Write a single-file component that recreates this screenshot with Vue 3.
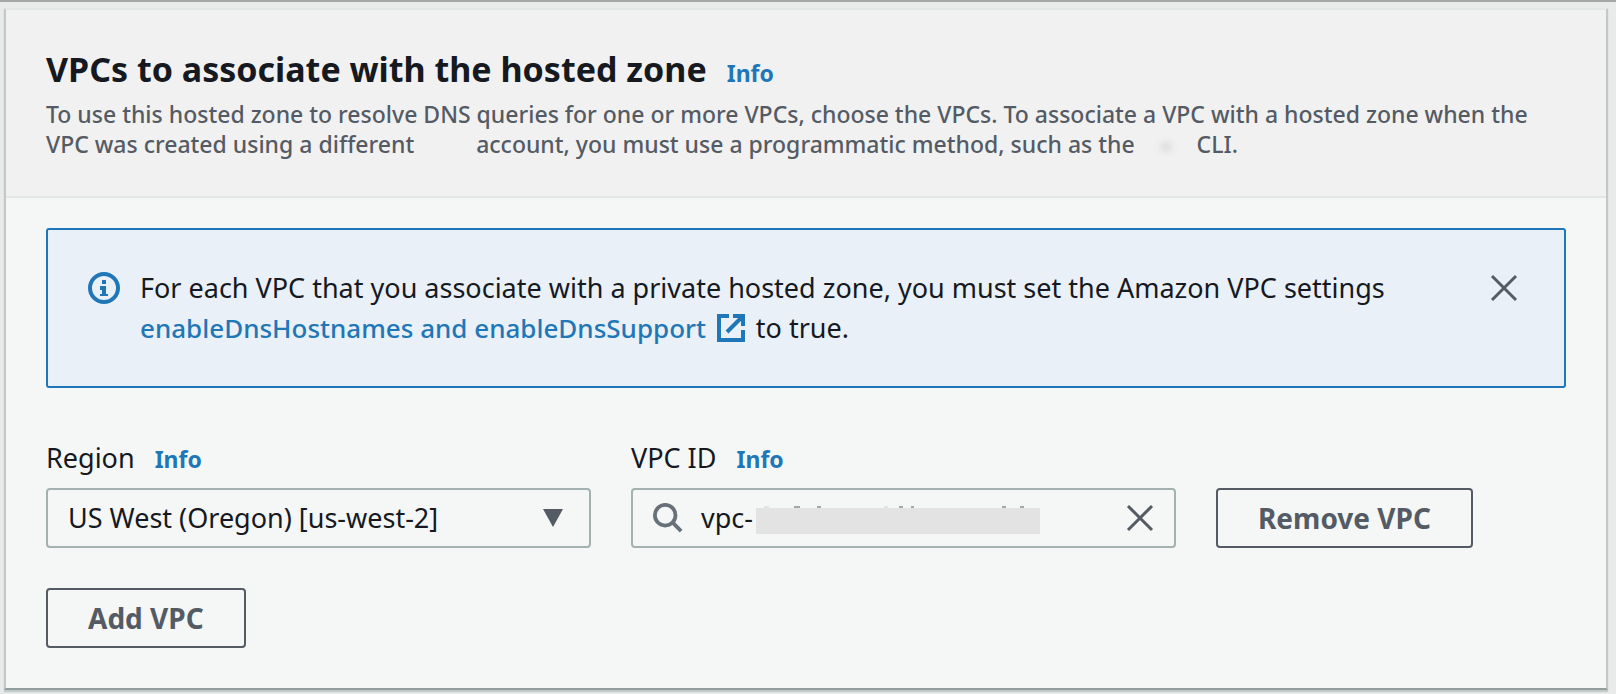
<template>
  <main class="page">
    <section class="panel">
      <header class="panel-header">
        <div class="title-row">
          <h2>VPCs to associate with the hosted zone</h2>
          <a class="info" href="#">Info</a>
        </div>
        <p class="description">
          To use this hosted zone to resolve DNS queries for one or more VPCs, choose the VPCs. To associate a VPC with a hosted zone when the
          VPC was created using a different <span class="blank"></span> account, you must use a programmatic method, such as the
          <span class="blank"><span class="smudge"></span></span> CLI.
        </p>
      </header>

      <div class="panel-body">
        <div v-if="showAlert" class="alert">
          <svg class="icon" viewBox="0 0 32 32" aria-hidden="true">
            <circle cx="16" cy="16" r="14" fill="none" stroke="currentColor" stroke-width="4" />
            <path d="M14 8h4v4h-4zM12 14h6v8h2v2h-8v-2h2v-4h-2z" fill="currentColor" />
          </svg>
          <p class="alert-text">
            For each VPC that you associate with a private hosted zone, you must set the Amazon VPC settings
            <a href="#">enableDnsHostnames and enableDnsSupport
              <svg class="external" viewBox="0 0 28 28" aria-hidden="true">
                <path d="M12 2H2v24h24V16M16 2h10v10M25 3L10 18" fill="none" stroke="currentColor" stroke-width="4" />
              </svg></a>
            to true.
          </p>
          <button class="icon-button" type="button" aria-label="Dismiss" @click="showAlert = false">
            <svg class="cross" viewBox="0 0 28 28" aria-hidden="true">
              <path d="M2 2l24 24M26 2L2 26" />
            </svg>
          </button>
        </div>

        <div class="fields">
          <div class="field">
            <div class="label-row">
              <label for="region">Region</label>
              <a class="info" href="#">Info</a>
            </div>
            <div class="control">
              <select id="region" v-model="region">
                <option v-for="r in regions" :key="r.id" :value="r.id">{{ r.name }} [{{ r.id }}]</option>
              </select>
              <svg class="caret" viewBox="0 0 20 18" aria-hidden="true">
                <path d="M0 0h20L10 18z" fill="currentColor" />
              </svg>
            </div>
          </div>

          <div class="field">
            <div class="label-row">
              <label for="vpc">VPC ID</label>
              <a class="info" href="#">Info</a>
            </div>
            <div class="control search">
              <svg class="magnifier" viewBox="0 0 32 32" aria-hidden="true">
                <circle cx="13" cy="13" r="11" />
                <path d="M21 21l9 9" />
              </svg>
              <input id="vpc" v-model="vpcId" type="text" />
              <svg class="mask" viewBox="0 0 284 28" aria-hidden="true">
                <path d="M38 1h6M61 1h4M143 1h4M155 1h3M246 1h4M264 1h4" stroke="#a4a6a7" stroke-width="2" />
                <path d="M8 1h5M128 1h4" stroke="#e3e5e5" stroke-width="2" />
                <path d="M0 2h284v26H0z" fill="#e3e3e3" />
              </svg>
              <button class="icon-button" type="button" aria-label="Clear" @click="vpcId = ''">
                <svg class="cross" viewBox="0 0 28 28" aria-hidden="true">
                  <path d="M2 2l24 24M26 2L2 26" />
                </svg>
              </button>
            </div>
          </div>

          <div class="field action">
            <button class="button" type="button">Remove VPC</button>
          </div>
        </div>

        <button class="button" type="button">Add VPC</button>
      </div>
    </section>
  </main>
</template>

<script setup>
import { ref } from 'vue';

const regions = [{ id: 'us-west-2', name: 'US West (Oregon)' }];

const showAlert = ref(true);
const region = ref('us-west-2');
const vpcId = ref('vpc-');
</script>

<style>
body {
  margin: 0;
  background: #e9ebea;
}
</style>

<style scoped>
.page {
  border-top: 2px solid #a6a6a5;
  padding: 6px 8px 4px 4px;
  color: #16191f;
  font-family: 'Noto Sans', 'Open Sans', sans-serif;
  font-size: 27px;
  line-height: 40px;
}
.panel {
  border: 2px solid #c2c8c7;
  border-top-color: #e3e7e6;
  border-bottom-color: #919c9d;
  background: #f4f7f6;
  box-shadow: 0 2px 1px 0 rgba(0, 28, 36, 0.16);
}
.panel-header {
  padding: 35px 40px 37px;
  border-bottom: 2px solid #e2e6e5;
  background: #f1f1f1;
}
.title-row,
.label-row {
  display: flex;
  align-items: baseline;
  gap: 20px;
}
h2 {
  margin: 0;
  font-size: 34px;
  font-weight: 700;
  line-height: 48px;
}
a {
  color: #1f77b8;
  text-decoration: none;
}
.info {
  font-size: 23px;
  font-weight: 700;
  line-height: 30px;
}
.description {
  margin: 6px 0 0;
  color: #545b64;
  font-size: 23px;
  font-weight: 500;
  line-height: 30px;
}
.blank {
  display: inline-block;
  width: 50px;
  text-align: center;
}
.smudge {
  display: inline-block;
  width: 12px;
  height: 10px;
  border-radius: 5px;
  background: #dcdddd;
  vertical-align: middle;
  filter: blur(3px);
}
.panel-body {
  padding: 30px 40px 40px;
}
.alert {
  display: flex;
  align-items: flex-start;
  gap: 20px;
  padding: 38px 46px 38px 40px;
  border: 2px solid #1f77b8;
  border-radius: 3px;
  background: #e9f0f7;
}
.icon {
  flex: none;
  width: 32px;
  height: 32px;
  margin-top: 4px;
  color: #1f77b8;
}
.alert-text {
  flex: 1;
  margin: 0;
}
.alert-text a {
  font-size: 26px;
  font-weight: 500;
}
.external {
  width: 28px;
  height: 28px;
  margin: 0 4px;
  vertical-align: -4px;
}
.icon-button {
  display: flex;
  flex: none;
  padding: 6px 0;
  border: 0;
  background: none;
  color: #545b64;
  cursor: pointer;
}
.cross {
  width: 28px;
  height: 28px;
  fill: none;
  stroke: currentColor;
  stroke-width: 3;
}
.fields {
  display: grid;
  grid-template-columns: 1fr 1fr 350px;
  gap: 40px;
  margin: 50px 0 40px;
}
.label-row {
  margin-bottom: 10px;
}
.control {
  position: relative;
  display: flex;
  align-items: center;
  box-sizing: border-box;
  height: 60px;
  border: 2px solid #a3b1b1;
  border-radius: 4px;
}
select,
input {
  border: 0;
  outline: 0;
  background: none;
  color: inherit;
  font: inherit;
}
select {
  width: 100%;
  height: 100%;
  padding: 0 56px 0 20px;
  appearance: none;
}
.caret {
  position: absolute;
  right: 26px;
  width: 20px;
  height: 18px;
  color: #545b64;
  pointer-events: none;
}
.search {
  padding: 0 20px;
}
.magnifier {
  flex: none;
  width: 30px;
  height: 30px;
  margin-right: 18px;
  fill: none;
  stroke: #687078;
  stroke-width: 4;
}
input {
  flex: none;
  width: 55px;
  padding: 0;
}
.mask {
  flex: none;
  width: 284px;
  height: 28px;
  margin-top: 4px;
}
.search .icon-button {
  margin-left: auto;
}
.action {
  align-self: end;
}
.button {
  height: 60px;
  padding: 0 40px;
  border: 2px solid #545b64;
  border-radius: 4px;
  background: none;
  color: #545b64;
  font: inherit;
  font-size: 28px;
  font-weight: 700;
  cursor: pointer;
}
</style>
